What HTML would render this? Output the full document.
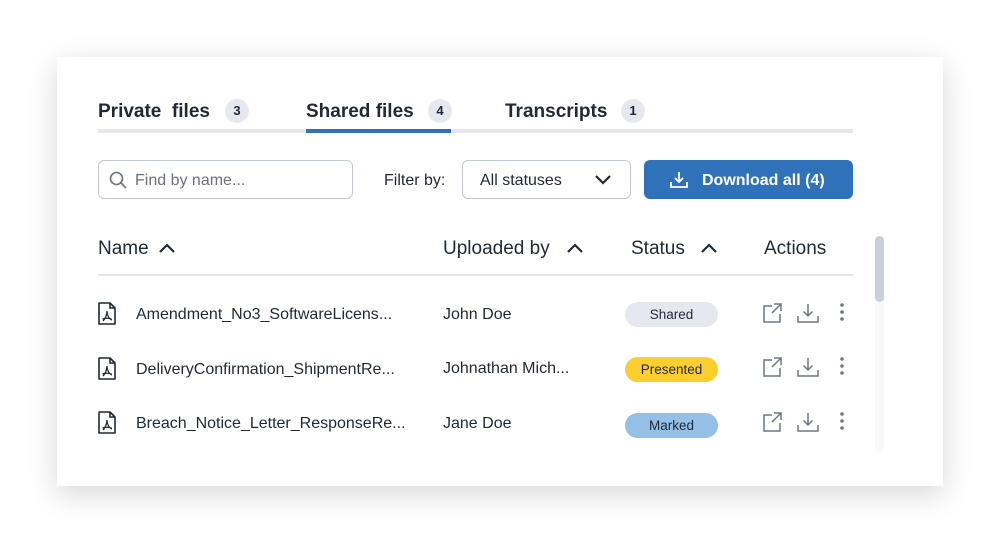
<!DOCTYPE html>
<html><head><style>
body{margin:0;width:1000px;height:553px;background:#fff;font-family:"Liberation Sans",sans-serif;color:#1f2937;position:relative;overflow:hidden}
.card{position:absolute;left:57px;top:57px;width:886px;height:429px;background:#fff;box-shadow:0 8px 28px rgba(0,0,0,.16)}
.a{position:absolute;white-space:nowrap}
.tab{font-size:19px;font-weight:bold;color:#1f2937;top:101px}
.badge{width:24px;height:24px;border-radius:12px;background:#e5e9ef;font-size:13px;font-weight:bold;text-align:center;line-height:24px;top:99px}
.th{font-size:19px;top:238px;color:#1f2937}
.td{font-size:16px;color:#1f2937}
.pill{width:93px;height:25px;border-radius:13px;font-size:13.5px;text-align:center;line-height:25px;left:625px}
</style></head><body>
<div class="card"></div>
<div class="a tab" style="left:98px">Private&nbsp; files</div><div class="a badge" style="left:225px">3</div>
<div class="a tab" style="left:306px">Shared files</div><div class="a badge" style="left:428px">4</div>
<div class="a tab" style="left:505px">Transcripts</div><div class="a badge" style="left:621px">1</div>
<div class="a" style="left:98px;top:129px;width:755px;height:4px;background:#e5e9ef"></div>
<div class="a" style="left:306px;top:129px;width:145px;height:4px;background:#2f72b9"></div>
<div class="a" style="left:98px;top:160px;width:255px;height:39px;border:1.5px solid #c3c9d1;border-radius:6px;box-sizing:border-box"></div>
<svg class="a" style="left:108px;top:170px" width="20" height="20" viewBox="0 0 20 20" fill="none" stroke="#6b7280" stroke-width="1.6"><circle cx="8.5" cy="8.5" r="6"/><path d="M13 13l5 5"/></svg>
<div class="a" style="left:135px;top:172px;font-size:16px;color:#6b7280">Find by name...</div>
<div class="a" style="left:384px;top:172px;font-size:16px">Filter by:</div>
<div class="a" style="left:462px;top:160px;width:169px;height:39px;border:1.5px solid #c3c9d1;border-radius:6px;box-sizing:border-box"></div>
<div class="a" style="left:480px;top:172px;font-size:16px">All statuses</div>
<svg class="a" style="left:594px;top:173px" width="18" height="14" viewBox="0 0 18 14" fill="none" stroke="#1f2937" stroke-width="2.2"><path d="M2 3l7 7 7-7"/></svg>
<div class="a" style="left:644px;top:160px;width:209px;height:39px;background:#2f72b9;border-radius:6px"></div>
<svg class="a" style="left:669px;top:170px" width="20" height="19" viewBox="0 0 20 19" fill="none" stroke="#fff" stroke-width="1.8"><path d="M10 2v10M6 8l4 4 4-4M2 12v5h16v-5"/></svg>
<div class="a" style="left:702px;top:172px;font-size:16px;font-weight:bold;color:#fff">Download all (4)</div>
<div class="a th" style="left:98px">Name</div>
<div class="a th" style="left:443px">Uploaded by</div>
<div class="a th" style="left:631px">Status</div>
<div class="a th" style="left:764px">Actions</div>
<svg class="a" style="left:158px;top:241px" width="18" height="14" viewBox="0 0 18 14" fill="none" stroke="#1f2937" stroke-width="2.2"><path d="M2 11l7-7 7 7"/></svg>
<svg class="a" style="left:566px;top:241px" width="18" height="14" viewBox="0 0 18 14" fill="none" stroke="#1f2937" stroke-width="2.2"><path d="M2 11l7-7 7 7"/></svg>
<svg class="a" style="left:700px;top:241px" width="18" height="14" viewBox="0 0 18 14" fill="none" stroke="#1f2937" stroke-width="2.2"><path d="M2 11l7-7 7 7"/></svg>
<div class="a" style="left:98px;top:274px;width:755px;height:2px;background:#e2e5ea"></div>
<div class="a" style="left:875px;top:236px;width:9px;height:216px;border-radius:5px;background:#f8f9fb"></div>
<div class="a" style="left:875px;top:236px;width:9px;height:66px;border-radius:5px;background:#cbd0d8"></div>

<div class="a td" style="left:136px;top:306px">Amendment_No3_SoftwareLicens...</div>
<div class="a td" style="left:443px;top:306px">John Doe</div>
<div class="a pill" style="top:302px;background:#e5e9ef">Shared</div>
<div class="a td" style="left:136px;top:361px">DeliveryConfirmation_ShipmentRe...</div>
<div class="a td" style="left:443px;top:360px">Johnathan Mich...</div>
<div class="a pill" style="top:357px;background:#fccf2f">Presented</div>
<div class="a td" style="left:136px;top:415px">Breach_Notice_Letter_ResponseRe...</div>
<div class="a td" style="left:443px;top:415px">Jane Doe</div>
<div class="a pill" style="top:413px;background:#94bfe6">Marked</div>

<svg class="a" style="left:0;top:0" width="1000" height="553" fill="none">
<defs>
<g id="pdf" stroke="#1f2937" stroke-width="1.6"><path d="M1 1h11l5 5v16H1z" stroke-linejoin="round"/><path d="M12 1v5h5"/><path d="M9 9c0 4-2 8-4 10M9 9c0 4 2 8 5 9M4.5 17c3-1 6-1 9 0" stroke-width="1.3"/></g>
<g id="act" stroke="#6b7786" stroke-width="1.5"><path d="M9 3H1v16h16v-8M11 1h7v7M18 1L9 10"/><path d="M45 1v12M40.5 8.5l4.5 4.5 4.5-4.5M35 13v6h20v-6"/></g>
</defs>
<use href="#pdf" x="98" y="302"/><use href="#pdf" x="98" y="357"/><use href="#pdf" x="98" y="411"/>
<use href="#act" x="763" y="303"/><use href="#act" x="763" y="357"/><use href="#act" x="763" y="412"/>
<g fill="#6b7786"><circle cx="842" cy="305" r="1.8"/><circle cx="842" cy="312" r="1.8"/><circle cx="842" cy="319" r="1.8"/>
<circle cx="842" cy="359" r="1.8"/><circle cx="842" cy="366" r="1.8"/><circle cx="842" cy="373" r="1.8"/>
<circle cx="842" cy="414" r="1.8"/><circle cx="842" cy="421" r="1.8"/><circle cx="842" cy="428" r="1.8"/></g>
</svg>
</body></html>
